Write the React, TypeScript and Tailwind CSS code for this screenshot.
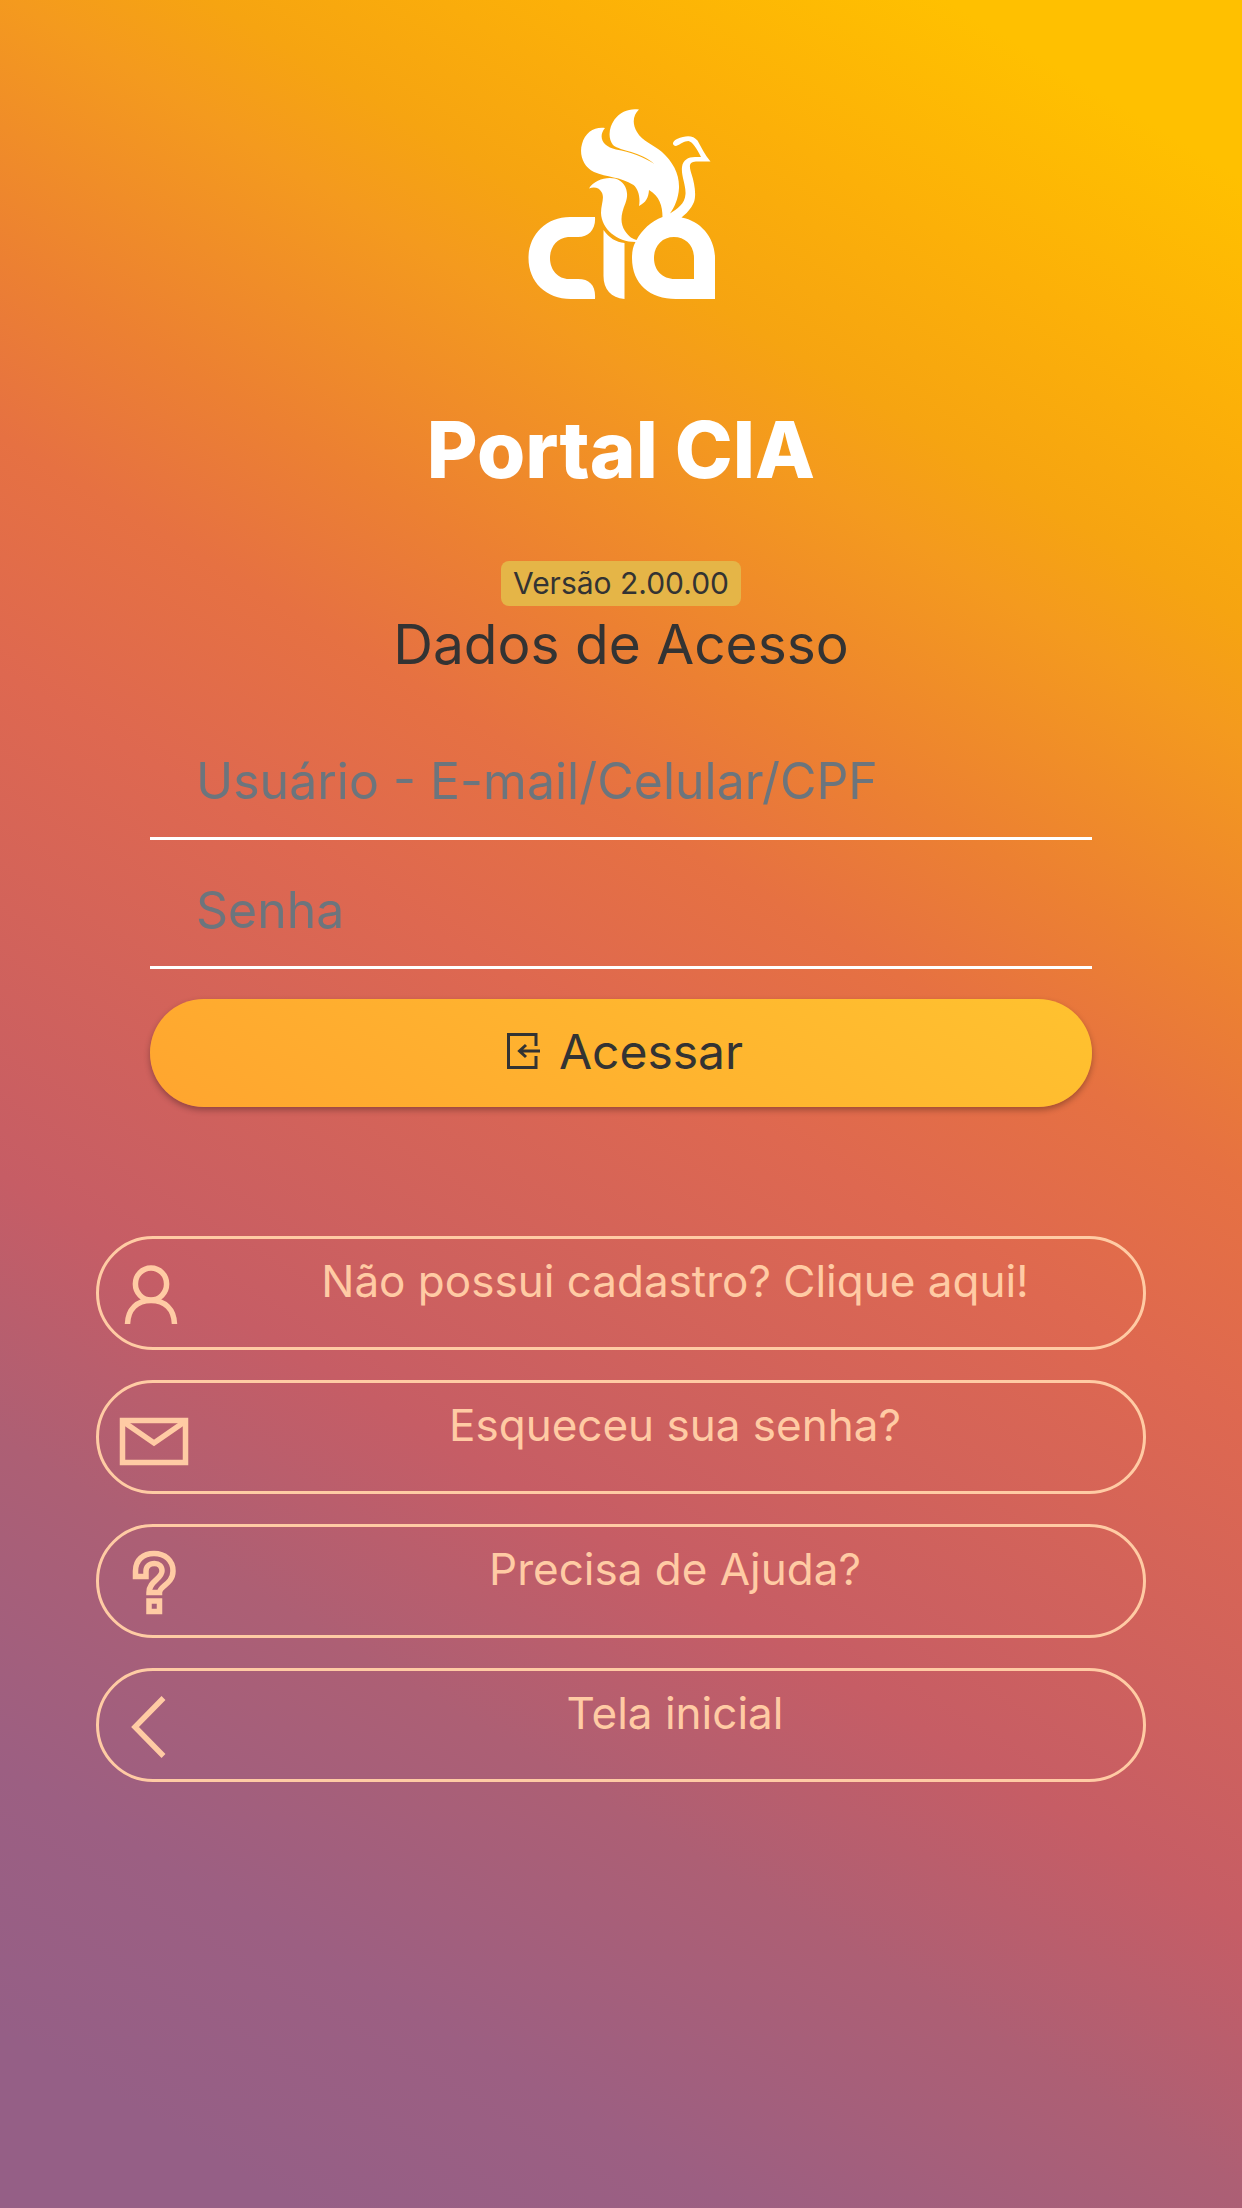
import React, { useState } from 'react';

type IconProps = { className?: string };

const Logo: React.FC<IconProps> = ({ className }) => (
  <svg viewBox="1 0 220 220" className={className} fill="#fff" role="img" aria-label="CIA">
    <path d="M129 19.500C123.500 24.500 121.500 33 127 42C132 51 144 55 152 62C163 72 169.500 84 169 98C168.500 109 164 118 160 123.500C167 119 175 114 175.500 104C176 95 171 86 172 77C173 70 178 67 185 67L191 67C187 59 183 52 178.500 51C174 51 171 54 166 56C161.500 55.500 162 51.500 167 49C176 45 183 45 187.500 50.500C191 57 195 65 200.500 71.500L186 71.500C178 72 179.500 77 181.500 84C184.500 93 186.500 105 184 112C181 119 176 124 171.500 127.500C191 131 205 148 205 168V209H166C140 209 122 194 122 168C122 162 123 156 125.500 152C107 152 91.500 139 91 123C91 114 95 108 91.500 102C89 97.500 84 96.500 79 98.500C84 90 96 86.500 105 88.500C116 91.500 119.500 103 115.500 113C110.500 125 110 133 115 141C119 147 123 149 126.500 150C132 140 141 131 152.500 127C152.500 116 149.500 106 139 100C138.500 107.500 136 112.500 129 116C130.500 108 128.500 99 123.500 95C110 86.500 97 87.500 84 82C73 76.500 69 64 72 54C75 42 85 36.500 95 38C87.500 47 93 57 106 59.500C120 62 134 67 144.500 74C130 61 111 61.500 103 55C97.500 48 99 37 104.500 29.500C110.500 21.500 120 18 129 19.500ZM164 147C152 147 144 156 144 168C144 180 152 189 165 189H184V168C184 155 175 147 164 147Z" fillRule="evenodd" />
    <path d="M85 127C86 139 79 147 68 147H58C47 148 40 157 40 168C40 180 48 189 59 189H68C80 189 86 196 85 209H61C36 209 18.500 192 18.500 168C18.500 145 36 127 60 127Z" />
    <path d="M93.500 140C99 148 106 152 114.500 153V209C101 208 93.500 199 93.500 186Z" />
  </svg>
);

const EnterIcon: React.FC<IconProps> = ({ className }) => (
  <svg viewBox="0 0 34 38" className={className} fill="none" stroke="currentColor" strokeWidth="3" aria-hidden="true">
    <path d="M29 13V1.500H1.500V34.500H29V23" />
    <path d="M33 18H13M19 12L12.500 18L19 24" />
  </svg>
);

const UserIcon: React.FC<IconProps> = ({ className }) => (
  <svg viewBox="0 0 72 72" className={className} fill="none" stroke="currentColor" strokeWidth="5.500" aria-hidden="true">
    <ellipse cx="32" cy="25" rx="15.600" ry="16" />
    <path d="M8.500 65C9 50 18 41.500 32 41.500S55 50 55.500 65" />
  </svg>
);

const MailIcon: React.FC<IconProps> = ({ className }) => (
  <svg viewBox="0 0 72 72" className={className} fill="none" stroke="currentColor" strokeWidth="5.500" aria-hidden="true">
    <path d="M3.500 17.500H66.500V59.500H3.500Z" />
    <path d="M4 18.500L35 40L66 18.500" />
  </svg>
);

const HelpIcon: React.FC<IconProps> = ({ className }) => (
  <svg viewBox="0 0 72 72" className={className} fill="none" stroke="currentColor" strokeWidth="5.500" aria-hidden="true">
    <path d="M16.500 29.500V24C16.500 13 24 6.500 35 6.500C46 6.500 54 13.500 54 24C54 37 40.500 39 40.500 45.500H30C30 34 43 32 43 24C43 19 40 16.500 35.500 16.500C30 16.500 27 20 27 24V29.500Z" />
    <path d="M30 54H40.500V64.500H30Z" />
  </svg>
);

const BackIcon: React.FC<IconProps> = ({ className }) => (
  <svg viewBox="0 0 72 72" className={className} fill="none" stroke="currentColor" strokeWidth="5.500" aria-hidden="true">
    <path d="M44.500 7L16 36L44.500 65" />
  </svg>
);

const links = [
  { label: 'Não possui cadastro? Clique aqui!', icon: UserIcon },
  { label: 'Esqueceu sua senha?', icon: MailIcon },
  { label: 'Precisa de Ajuda?', icon: HelpIcon },
  { label: 'Tela inicial', icon: BackIcon },
];

const inputClass =
  'block w-full h-[126px] px-[46px] pt-[10px] border-b-[3px] border-white bg-transparent text-[50px] text-[#212529] placeholder:text-[#6c757d] placeholder:opacity-100 focus:outline-none';

const App: React.FC = () => {
  const [user, setUser] = useState('');
  const [password, setPassword] = useState('');

  return (
    <div className="min-h-screen bg-[linear-gradient(31deg,#955f86_6%,#9c5f82_15%,#ad5f74_26%,#c65d65_35%,#de6850_52%,#e67142_60%,#ec8032_66%,#f49a1e_75%,#f6a411_79%,#fcb008_86%,#ffc000_94%)] font-[Inter,'Open_Sans',sans-serif] text-[#333]">
      <main className="flex flex-col items-center px-24 py-[90px]">
        <Logo className="w-[220px] h-[220px]" />
        <h1 className="mt-[92px] text-[78px] leading-[96px] font-extrabold text-white">Portal CIA</h1>
        <span className="mt-[63px] px-3 rounded-lg bg-[#e5b547] text-[30px] leading-[45px]">Versão 2.00.00</span>
        <h2 className="mt-2 text-[55px] leading-[60px]">Dados de Acesso</h2>

        <form className="w-full px-[54px] mt-10" onSubmit={(e) => e.preventDefault()}>
          <input
            className={inputClass}
            type="text"
            aria-label="Usuário - E-mail/Celular/CPF"
            placeholder="Usuário - E-mail/Celular/CPF"
            value={user}
            onChange={(e) => setUser(e.target.value)}
          />
          <input
            className={`${inputClass} mt-[3px]`}
            type="password"
            aria-label="Senha"
            placeholder="Senha"
            value={password}
            onChange={(e) => setPassword(e.target.value)}
          />
          <button
            type="submit"
            className="flex items-center justify-center gap-[18px] w-full h-[108px] mt-[30px] pl-2 pb-[2px] rounded-full bg-[linear-gradient(31deg,#ffa52f,#ffc22f)] shadow-[0_3px_6px_rgba(0,0,0,0.3)] text-[48px]"
          >
            <EnterIcon className="w-[34px] h-[38px]" />
            Acessar
          </button>
        </form>

        <nav className="flex flex-col gap-[30px] w-full mt-[129px]">
          {links.map(({ label, icon: Icon }) => (
            <a
              key={label}
              href="#"
              className="flex items-start h-[114px] px-5 pt-5 rounded-full border-[3px] border-[#ffcba4] text-[#ffcba4] text-[44px] leading-[44px]"
            >
              <Icon className="w-[72px] h-[72px]" />
              <span className="flex-1 pl-9 text-center">{label}</span>
            </a>
          ))}
        </nav>
      </main>
    </div>
  );
};

export default App;
